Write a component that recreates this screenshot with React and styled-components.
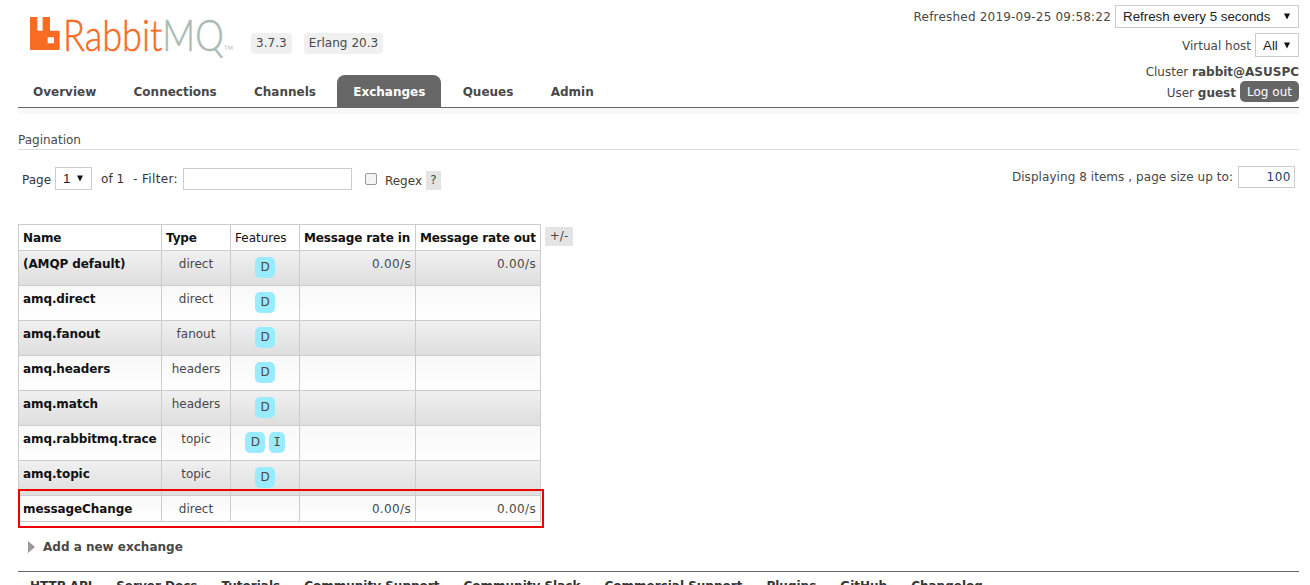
import styled, { createGlobalStyle } from "styled-components";

const GlobalStyle = createGlobalStyle`
  html, body {
    margin: 0;
    height: 585px;
    overflow: hidden;
    background: #fff;
  }
  body {
    font: 12px "DejaVu Sans", Verdana, sans-serif;
    color: #484848;
  }
`;

const rows = [
  { name: "(AMQP default)", type: "direct", features: ["D"], rateIn: "0.00/s", rateOut: "0.00/s" },
  { name: "amq.direct", type: "direct", features: ["D"] },
  { name: "amq.fanout", type: "fanout", features: ["D"] },
  { name: "amq.headers", type: "headers", features: ["D"] },
  { name: "amq.match", type: "headers", features: ["D"] },
  { name: "amq.rabbitmq.trace", type: "topic", features: ["D", "I"] },
  { name: "amq.topic", type: "topic", features: ["D"] },
  { name: "messageChange", type: "direct", features: [], rateIn: "0.00/s", rateOut: "0.00/s" },
];

const tabs = ["Overview", "Connections", "Channels", "Exchanges", "Queues", "Admin"];
const footerLinks = [
  "HTTP API",
  "Server Docs",
  "Tutorials",
  "Community Support",
  "Community Slack",
  "Commercial Support",
  "Plugins",
  "GitHub",
  "Changelog",
];

function Logo() {
  return (
    <svg width="30" height="33" viewBox="0 0 30 33">
      <path
        fill="#f76b23"
        fillRule="evenodd"
        d="M0 0h7.4v13.8h5.2V0H20v13.8h9.6V33H0z M17.7 20.3v6h6.2v-6z"
      />
    </svg>
  );
}

function Arrow() {
  return (
    <svg width="6" height="7" viewBox="0 0 6 7">
      <path d="M0 .5h6L3 6.5z" fill="#111" />
    </svg>
  );
}

export default function App() {
  return (
    <Page>
      <GlobalStyle />
      <Header>
        <Brand>
          <LogoRow>
            <Logo />
            <Wordmark>
              <WordmarkText>
                Rabbit<span>MQ</span>
              </WordmarkText>
              <Trademark>TM</Trademark>
            </Wordmark>
            <Version>3.7.3</Version>
            <Version>Erlang 20.3</Version>
          </LogoRow>
          <Tabs>
            {tabs.map((tab) => (
              <Tab key={tab} $active={tab === "Exchanges"}>
                {tab}
              </Tab>
            ))}
          </Tabs>
        </Brand>
        <Status>
          <StatusRow $height={23} $gap={5}>
            <Refreshed>Refreshed 2019-09-25 09:58:22</Refreshed>
            <Select $width={184} $height={23}>
              Refresh every 5 seconds
              <Arrow />
            </Select>
          </StatusRow>
          <StatusRow $height={24} $gap={5}>
            <StatusText>Virtual host</StatusText>
            <Select $width={44} $height={24}>
              All
              <Arrow />
            </Select>
          </StatusRow>
          <StatusRow $height={18} $gap={1}>
            <StatusText>
              Cluster <b>rabbit@ASUSPC</b>
            </StatusText>
          </StatusRow>
          <StatusRow $height={21} $gap={0}>
            <StatusText>
              User <b>guest</b>
            </StatusText>
            <LogOut>Log out</LogOut>
          </StatusRow>
        </Status>
      </Header>
      <Band />

      <SectionTitle>Pagination</SectionTitle>
      <FilterBar>
        <FilterGroup>
          <Label>Page</Label>
          <Select $width={37} $height={23}>
            1
            <Arrow />
          </Select>
          <OfLabel>of 1</OfLabel>
          <FilterLabel>- Filter:</FilterLabel>
          <TextInput $width={169} />
          <Checkbox />
          <RegexLabel>Regex</RegexLabel>
          <Help>?</Help>
        </FilterGroup>
        <PageSize>
          <span>Displaying 8 items , page size up to:</span>
          <SizeInput>100</SizeInput>
        </PageSize>
      </FilterBar>

      <TableRow>
        <TableFrame>
          <List>
            <colgroup>
              <col width="143" />
              <col width="69" />
              <col width="69" />
              <col width="116" />
              <col width="125" />
            </colgroup>
            <thead>
              <tr>
                <Th>Name</Th>
                <Th>Type</Th>
                <Th $plain>Features</Th>
                <Th>Message rate in</Th>
                <Th>Message rate out</Th>
              </tr>
            </thead>
            <tbody>
              {rows.map((row, i) => (
                <Row key={row.name} $alt={i % 2 === 0}>
                  <NameCell>{row.name}</NameCell>
                  <TypeCell>{row.type}</TypeCell>
                  <FeatureCell>
                    {row.features.map((f) => (
                      <Badge key={f} $narrow={f === "I"}>
                        {f}
                      </Badge>
                    ))}
                  </FeatureCell>
                  <RateCell>{row.rateIn}</RateCell>
                  <RateCell>{row.rateOut}</RateCell>
                </Row>
              ))}
            </tbody>
          </List>
          <Highlight />
        </TableFrame>
        <Toggle>+/-</Toggle>
      </TableRow>

      <AddNew>
        <svg width="7" height="12" viewBox="0 0 7 12">
          <path d="M0 0l7 6-7 6z" fill="#999" />
        </svg>
        Add a new exchange
      </AddNew>

      <Footer>
        {footerLinks.map((link) => (
          <FooterLink key={link}>{link}</FooterLink>
        ))}
      </Footer>
    </Page>
  );
}

const Page = styled.div`
  padding: 0 11px 0 18px;
`;

const Header = styled.header`
  display: flex;
  justify-content: space-between;
  height: 107px;
  border-bottom: 1px solid #666;
`;

const Brand = styled.div`
  display: flex;
  flex-direction: column;
`;

const LogoRow = styled.div`
  height: 75px;
  box-sizing: border-box;
  padding: 17px 0 0 12px;
  display: flex;
  align-items: flex-start;

  svg {
    flex: none;
  }
`;

const Wordmark = styled.div`
  position: relative;
  width: 188px;
  margin-left: 3px;
  height: 36px;
`;

const WordmarkText = styled.div`
  font: 300 43px/36px Lato, "Open Sans", sans-serif;
  color: #f76b23;
  white-space: nowrap;
  transform: scaleX(0.84);
  transform-origin: left center;
  -webkit-text-stroke: 0.5px currentColor;

  span {
    color: #a9bab3;
  }
`;

const Trademark = styled.span`
  position: absolute;
  left: 161px;
  top: 27px;
  font-size: 6px;
  color: #bbb;
`;

const Version = styled.div`
  margin: 16px 12px 0 0;
  height: 21px;
  line-height: 21px;
  padding: 0 5px;
  background: #f0f0f0;
  border-radius: 4px;
  letter-spacing: 0.05px;
`;

const Tabs = styled.nav`
  display: flex;
  height: 32px;
  margin-left: -1px;
`;

const Tab = styled.a`
  padding: 2px 16px 0;
  margin-right: 5.3px;
  line-height: 30px;
  font-size: 12px;
  font-weight: bold;
  border-radius: 8px 8px 0 0;
  color: ${(p) => (p.$active ? "#fff" : "#484848")};
  background: ${(p) => (p.$active ? "#666" : "transparent")};
`;

const Status = styled.div`
  display: flex;
  flex-direction: column;
  align-items: flex-end;
  padding-top: 5px;
`;

const StatusRow = styled.div`
  flex: none;
  height: ${(p) => p.$height}px;
  margin-bottom: ${(p) => p.$gap}px;
  display: flex;
  align-items: center;
  gap: 4px;
`;

const StatusText = styled.span`
  padding-top: 2px;
`;

const Refreshed = styled.span`
  letter-spacing: 0.2px;
`;

const Select = styled.div`
  width: ${(p) => p.$width}px;
  height: ${(p) => p.$height}px;
  box-sizing: border-box;
  padding: 0 8px 0 7px;
  border: 1px solid #ccc;
  background: #fff;
  display: flex;
  align-items: center;
  justify-content: space-between;
  font: 13.33px "Liberation Sans", Arial, sans-serif;
  color: #222;
`;

const LogOut = styled.button`
  border: 0;
  width: 59px;
  height: 21px;
  padding: 1px 0 0;
  border-radius: 5px;
  background: #666;
  color: #fff;
  font: 12px "DejaVu Sans", Verdana, sans-serif;
`;

const Band = styled.div`
  height: 6px;
  background: #f8f8f8;
`;

const SectionTitle = styled.h2`
  margin: 18px 0 0;
  height: 17px;
  font-size: 12px;
  font-weight: normal;
  line-height: 16px;
  border-bottom: 1px solid #ddd;
`;

const FilterBar = styled.div`
  display: flex;
  justify-content: space-between;
  align-items: flex-start;
  margin-top: 16px;
  padding-right: 4px;
`;

const FilterGroup = styled.div`
  display: flex;
  align-items: center;
  padding-left: 4px;
  margin-top: 1px;
`;

const Label = styled.span`
  margin: 3px 4px 0 0;
  color: #333;
`;

const OfLabel = styled.span`
  margin-left: 9px;
  color: #333;
`;

const FilterLabel = styled.span`
  margin: 0 5px 0 9px;
  color: #333;
  letter-spacing: 0.35px;
`;

const TextInput = styled.div`
  width: ${(p) => p.$width}px;
  height: 22px;
  box-sizing: border-box;
  border: 1px solid #ccc;
`;

const Checkbox = styled.span`
  width: 12px;
  height: 12px;
  box-sizing: border-box;
  margin-left: 13px;
  border: 1px solid #999;
  border-radius: 2px;
  background: #f4f4f4;
`;

const RegexLabel = styled.span`
  margin: 4px 0 0 8px;
  color: #4a3a2a;
`;

const Help = styled.span`
  width: 15px;
  height: 19px;
  margin: 4px 0 0 4px;
  background: #e4e4e4;
  line-height: 19px;
  text-align: center;
`;

const PageSize = styled.div`
  display: flex;
  align-items: center;
  gap: 5px;

  span {
    letter-spacing: 0.06px;
  }
`;

const SizeInput = styled.div`
  width: 57px;
  height: 22px;
  box-sizing: border-box;
  border: 1px solid #ccc;
  padding-right: 3px;
  text-align: right;
  line-height: 20px;
  color: #1f3c66;
  letter-spacing: 0.5px;
`;

const TableRow = styled.div`
  display: flex;
  align-items: flex-start;
  margin-top: 34px;
`;

const TableFrame = styled.div`
  position: relative;
`;

const List = styled.table`
  border-collapse: collapse;
  table-layout: fixed;
  width: 522px;
`;

const Th = styled.th`
  height: 25px;
  padding: 0 4px;
  border: 1px solid #ccc;
  text-align: left;
  color: #111;
  white-space: nowrap;
  font-weight: ${(p) => (p.$plain ? "normal" : "bold")};
  letter-spacing: ${(p) => (p.$plain ? "0" : "-0.13px")};
`;

const Row = styled.tr`
  background: ${(p) =>
    p.$alt
      ? "linear-gradient(#f0f0f0, #dedede)"
      : "linear-gradient(#f8f8f8, #fff)"};
`;

const Cell = styled.td`
  height: 35px;
  padding: 6px 4px 0;
  box-sizing: border-box;
  border: 1px solid #ccc;
  vertical-align: top;
  line-height: 15px;
  white-space: nowrap;

  tr:last-child & {
    height: 26px;
    padding-top: 6px;
  }
`;

const NameCell = styled(Cell)`
  font-weight: bold;
  color: #111;
  letter-spacing: -0.1px;
`;

const TypeCell = styled(Cell)`
  text-align: center;
`;

const FeatureCell = styled(Cell)`
  text-align: center;
  padding: 6px 0 0;
`;

const RateCell = styled(Cell)`
  text-align: right;
  letter-spacing: 0.35px;
`;

const Badge = styled.span`
  display: inline-block;
  box-sizing: border-box;
  height: 21px;
  line-height: 21px;
  padding: 0 ${(p) => (p.$narrow ? 4 : 5)}px;
  min-width: ${(p) => (p.$narrow ? 15 : 20)}px;
  margin: 0 2px;
  background: #99ebff;
  border-radius: 5px;
  font-family: ${(p) =>
    p.$narrow ? '"DejaVu Sans Mono", monospace' : "inherit"};
`;

const Highlight = styled.div`
  position: absolute;
  left: 0;
  top: 265px;
  width: 526px;
  height: 39px;
  box-sizing: border-box;
  border: 2px solid #ee0000;
  pointer-events: none;
`;

const Toggle = styled.span`
  margin: 3px 0 0 4px;
  width: 28px;
  height: 19px;
  line-height: 19px;
  text-align: center;
  background: #e4e4e4;
`;

const AddNew = styled.div`
  display: flex;
  align-items: center;
  gap: 8px;
  margin: 16px 0 0 10px;
  height: 18px;
  font-size: 12px;
  font-weight: bold;
`;

const Footer = styled.footer`
  display: flex;
  margin-top: 15px;
  padding: 7px 0 0 12px;
  border-top: 1px solid #666;
  gap: 24px;
`;

const FooterLink = styled.a`
  font-size: 12px;
  font-weight: bold;
  color: #333;
  white-space: nowrap;
`;
